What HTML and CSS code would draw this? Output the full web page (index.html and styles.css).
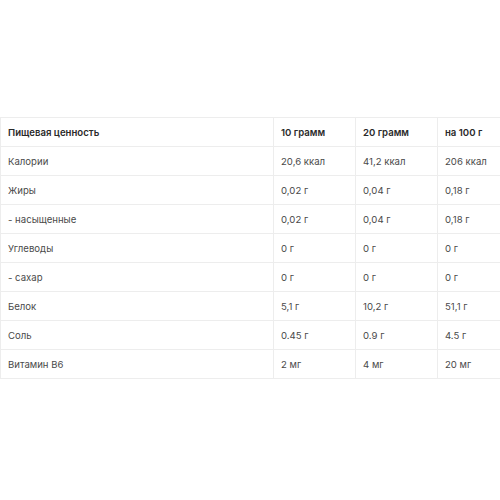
FILE: index.html
```html
<!DOCTYPE html>
<html lang="ru">
<head>
<meta charset="utf-8">
<link rel="stylesheet" href="styles.css">
</head>
<body>
<div class="wrap">
  <div class="nutri">
    <div class="row head"><div class="cell">Пищевая ценность</div><div class="cell">10 грамм</div><div class="cell">20 грамм</div><div class="cell">на 100 г</div></div>
    <div class="row"><div class="cell">Калории</div><div class="cell">20,6 ккал</div><div class="cell">41,2 ккал</div><div class="cell">206 ккал</div></div>
    <div class="row"><div class="cell">Жиры</div><div class="cell">0,02 г</div><div class="cell">0,04 г</div><div class="cell">0,18 г</div></div>
    <div class="row"><div class="cell">- насыщенные</div><div class="cell">0,02 г</div><div class="cell">0,04 г</div><div class="cell">0,18 г</div></div>
    <div class="row"><div class="cell">Углеводы</div><div class="cell">0 г</div><div class="cell">0 г</div><div class="cell">0 г</div></div>
    <div class="row"><div class="cell">- сахар</div><div class="cell">0 г</div><div class="cell">0 г</div><div class="cell">0 г</div></div>
    <div class="row"><div class="cell">Белок</div><div class="cell">5,1 г</div><div class="cell">10,2 г</div><div class="cell">51,1 г</div></div>
    <div class="row"><div class="cell">Соль</div><div class="cell">0.45 г</div><div class="cell">0.9 г</div><div class="cell">4.5 г</div></div>
    <div class="row"><div class="cell">Витамин B6</div><div class="cell">2 мг</div><div class="cell">4 мг</div><div class="cell">20 мг</div></div>
  </div>
</div>
</body>
</html>
```
FILE: styles.css
```css
html, body {
  margin: 0;
  padding: 0;
  background: #fff;
}
.wrap {
  padding-top: 117px;
  width: 500px;
}
.nutri {
  font-family: "Inter", "Roboto", sans-serif;
  font-size: 9.6px;
  color: #4a4a4a;
  border-top: 1px solid #ededed;
}
.row {
  display: grid;
  grid-template-columns: 273px 82px 82px 1fr;
  border-bottom: 1px solid #ededed;
}
.cell {
  height: 28px;
  display: flex;
  align-items: center;
  padding-left: 7px;
  border-left: 1px solid #ededed;
  white-space: nowrap;
  box-sizing: border-box;
}
.cell:first-child {
  padding-left: 7px;
}
.head .cell {
  font-weight: 600;
  color: #2a2a2a;
}
```
